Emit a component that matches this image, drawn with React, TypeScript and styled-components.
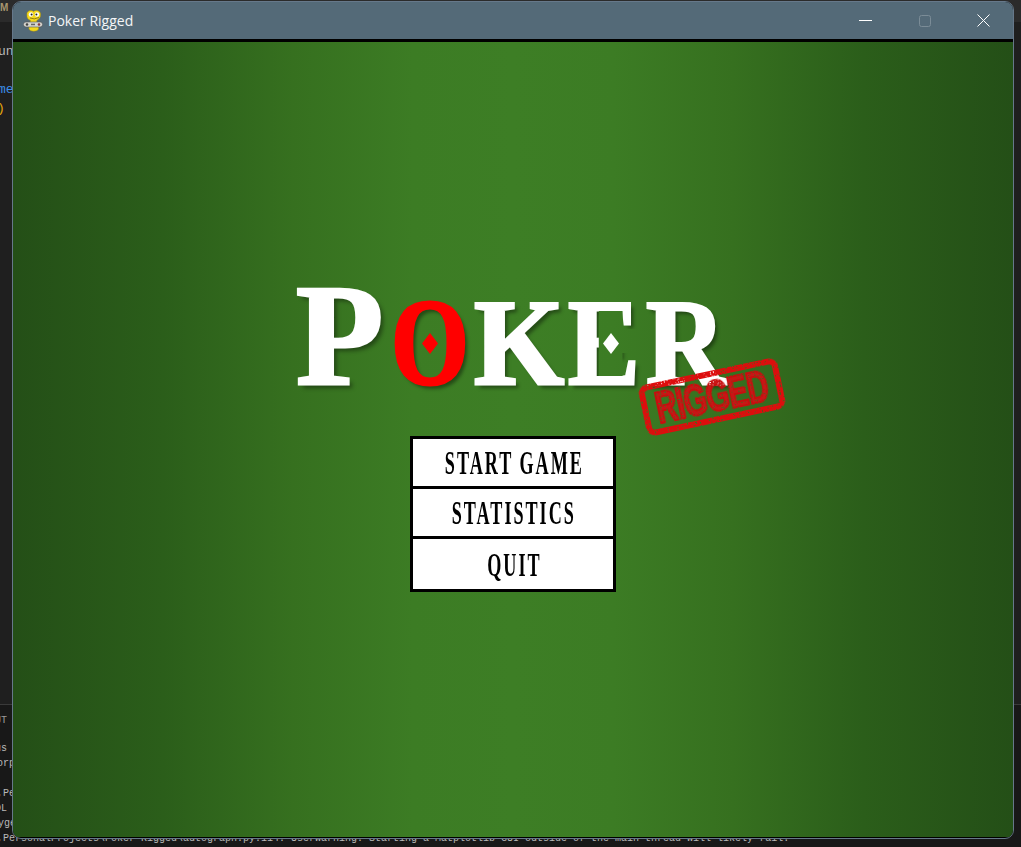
import { FC } from 'react';
import styled, { createGlobalStyle } from 'styled-components';

const GlobalStyle = createGlobalStyle`
  html, body {
    margin: 0;
    padding: 0;
    background: #181818;
  }
`;

const Desktop = styled.div`
  position: relative;
  width: 1021px;
  height: 847px;
  overflow: hidden;
  background: #181818;
  font-family: 'Liberation Mono', monospace;
`;

/* editor + terminal that sit behind the game window */
const Backdrop = styled.div`
  display: flex;
  flex-direction: column;
  height: 100%;
`;

const EditorPane = styled.div`
  height: 705px;
  flex: none;
  box-sizing: border-box;
  background: #1f1f1f;
  border-bottom: 1px solid #3a3a3a;
`;

const MenuStrip = styled.div`
  height: 22px;
  box-sizing: border-box;
  background: #2b2b2b;
  color: #a8956e;
  font: bold 10px/16px 'Liberation Sans', sans-serif;
`;

const TerminalPane = styled.div`
  flex: 1;
  padding-top: 8px;
`;

const BackLine = styled.div<{ $color?: string; $big?: boolean; $shift?: number }>`
  height: ${(p) => (p.$big ? 19 : 15)}px;
  line-height: ${(p) => (p.$big ? 19 : 15)}px;
  font-size: ${(p) => (p.$big ? 13 : 10)}px;
  margin-left: ${(p) => p.$shift ?? 0}px;
  color: ${(p) => p.$color ?? '#b8b8b8'};
  white-space: pre;
`;

const EditorLines = styled.div`
  padding-top: 20px;
`;

const TerminalLines = styled.div`
  padding-top: 13px;
`;

const Window = styled.div`
  position: absolute;
  left: 12px;
  top: 1px;
  width: 1002px;
  height: 838px;
  box-sizing: border-box;
  display: flex;
  flex-direction: column;
  overflow: hidden;
  background: #000;
  border: 1px solid #66788a;
  border-radius: 9px;
`;

const TitleBar = styled.header`
  height: 37px;
  flex: none;
  display: flex;
  align-items: center;
  background: #546a78;
  border-bottom: 3px solid #000;
  padding-left: 10px;
  color: #f4f6f7;
  font: 14px 'Open Sans', sans-serif;
`;

const AppIcon = styled.svg`
  width: 20px;
  height: 22px;
  flex: none;
  margin-right: 5px;
`;

const Title = styled.span`
  flex: 1;
`;

const WindowButton = styled.button<{ $dim?: boolean }>`
  width: 59px;
  height: 100%;
  padding: 0;
  display: flex;
  align-items: center;
  justify-content: center;
  border: 0;
  background: none;
  color: ${(p) => (p.$dim ? '#7b8c97' : '#ffffff')};
`;

const Felt = styled.main`
  flex: 1;
  display: flex;
  flex-direction: column;
  align-items: center;
  justify-content: center;
  margin-bottom: 1px;
  background: linear-gradient(
    90deg,
    #244f17 0%,
    #2b5e1a 15%,
    #36701f 28%,
    #3c7c24 40%,
    #3d7e25 50%,
    #3c7c24 60%,
    #36701f 72%,
    #2b5e1a 85%,
    #244f17 100%
  );
`;

const Logo = styled.div`
  position: relative;
  width: 426px;
  height: 149px;
  margin-left: -8px;
  display: flex;
  align-items: flex-start;
`;

const Letter = styled.span<{
  $red?: boolean;
  $big?: boolean;
  $notch?: boolean;
  $width: number;
  $scale: number;
}>`
  display: block;
  flex: none;
  width: ${(p) => p.$width}px;
  margin-top: ${(p) => (p.$big ? -40 : -20)}px;
  font: bold ${(p) => (p.$big ? 143 : 122)}px/1.25 'Liberation Serif', serif;
  color: ${(p) => (p.$red ? '#ff0000' : '#ffffff')};
  -webkit-text-stroke: 3px ${(p) => (p.$red ? '#ff0000' : '#ffffff')};
  text-shadow: 4px 4px 4px rgba(0, 0, 0, 0.4);
  transform: scaleX(${(p) => p.$scale});
  transform-origin: left top;
  ${(p) =>
    p.$notch &&
    `clip-path: polygon(evenodd, -20px -20px, 130px -20px, 130px 180px, -20px 180px, -20px -20px,
      35px 44px, 62px 44px, 62px 62px, 95px 62px, 95px 86px, 62px 86px, 62px 109px, 35px 109px, 35px 44px);`}
`;

const Diamond = styled.svg`
  position: absolute;
  top: 46px;
  width: 16px;
  height: 21px;
`;

const Stamp = styled.div`
  position: absolute;
  left: 345px;
  top: 84px;
  width: 142px;
  height: 52px;
  box-sizing: border-box;
  display: flex;
  align-items: center;
  justify-content: center;
  border: 6px solid #dd1010;
  border-radius: 9px;
  transform: rotate(-12deg);
  filter: url(#stamp-wear);
`;

const StampText = styled.span`
  display: block;
  font: bold 44px/36px 'Liberation Sans', sans-serif;
  color: #c81414;
  letter-spacing: -1px;
  transform: scaleX(0.68);
  -webkit-text-stroke: 2px #c81010;
`;

const HiddenDefs = styled.svg`
  position: absolute;
  width: 0;
  height: 0;
`;

const Menu = styled.nav`
  display: flex;
  flex-direction: column;
  width: 200px;
  border: 3px solid #000;
  background: #000;
  gap: 3px;
`;

const MenuButton = styled.button<{ $tall?: boolean }>`
  height: ${(p) => (p.$tall ? 50 : 47)}px;
  padding: 0;
  border: 0;
  display: flex;
  align-items: center;
  justify-content: center;
  background: #fff;
  color: #000;
`;

const MenuLabel = styled.span`
  display: block;
  margin: 2px 0 0 2px;
  font: 33px/1 'Liberation Serif', serif;
  font-weight: 700;
  letter-spacing: 3.6px;
  white-space: nowrap;
  transform: scaleX(0.55);
`;

const PygameSnake: FC = () => (
  <AppIcon viewBox="0 0 20 22">
    <path
      d="M4 5 C3 1 8 -1 10.5 1.5 C13 -1 18.5 1 17.5 5 C18 8.5 14 10 13.5 11 C15 13 16 16 15.5 19 C14.5 22 7 22 6 19 C5.5 16 7 13 7.5 10.5 C5 9.5 3.5 7.5 4 5 Z"
      fill="#f4d81c"
      stroke="#a88f10"
      strokeWidth="0.5"
    />
    <circle cx="8" cy="4.5" r="2.2" fill="#fff" />
    <circle cx="14" cy="4.5" r="2.2" fill="#fff" />
    <circle cx="8.6" cy="4.6" r="1" fill="#222" />
    <circle cx="13.4" cy="4.6" r="1" fill="#222" />
    <path d="M7 8 Q11 10 16 7.5" stroke="#6a5a08" strokeWidth="0.7" fill="none" />
    <rect x="0.5" y="12" width="19" height="5" rx="2.4" fill="#d6d6d0" stroke="#555" strokeWidth="0.6" />
    <circle cx="4" cy="14.5" r="1.3" fill="#444" />
    <circle cx="16" cy="14.5" r="1.3" fill="#8a3a3a" />
    <rect x="8" y="13.7" width="4" height="1.5" fill="#666" />
  </AppIcon>
);

const DiamondShape: FC<{ fill: string; left: number }> = ({ fill, left }) => (
  <Diamond viewBox="0 0 16 21" style={{ left }}>
    <path d="M8 0 L16 10.5 L8 21 L0 10.5 Z" fill={fill} />
  </Diamond>
);

const App: FC = () => (
  <Desktop>
    <GlobalStyle />
    <HiddenDefs>
      <filter id="stamp-wear" x="-5%" y="-5%" width="110%" height="110%">
        <feTurbulence type="fractalNoise" baseFrequency="0.7" numOctaves="2" seed="4" result="noise" />
        <feColorMatrix
          in="noise"
          type="matrix"
          values="0 0 0 0 0  0 0 0 0 0  0 0 0 0 0  0 0 0 -9 6.6"
          result="wear"
        />
        <feComposite in="SourceGraphic" in2="wear" operator="in" />
      </filter>
    </HiddenDefs>
    <Backdrop>
      <EditorPane>
        <MenuStrip>M</MenuStrip>
        <EditorLines>
          <BackLine $big $shift={-2}>un</BackLine>
          <BackLine $big> </BackLine>
          <BackLine $big $shift={-2} $color="#3b8eea">me</BackLine>
          <BackLine $big $shift={-3} $color="#e5a50a">{')'}</BackLine>
        </EditorLines>
      </EditorPane>
      <TerminalPane>
        <BackLine $shift={-5} $color="#9a9a9a">UT</BackLine>
        <TerminalLines>
          <BackLine $shift={-5}>us</BackLine>
          <BackLine $shift={-3}>orp</BackLine>
          <BackLine> </BackLine>
          <BackLine $shift={-3}>,Pe</BackLine>
          <BackLine $shift={-5}>OL</BackLine>
          <BackLine $shift={-2}>yge</BackLine>
          <BackLine $shift={-3}>
            {',PersonalProjects\\Poker Rigged\\autograph.py:114: UserWarning: Starting a Matplotlib GUI outside of the main thread will likely fail.'}
          </BackLine>
        </TerminalLines>
      </TerminalPane>
    </Backdrop>
    <Window>
      <TitleBar>
        <PygameSnake />
        <Title>Poker Rigged</Title>
        <WindowButton>
          <svg width="13" height="2"><rect width="13" height="1" fill="currentColor" /></svg>
        </WindowButton>
        <WindowButton $dim>
          <svg width="12" height="12">
            <rect x="0.5" y="0.5" width="11" height="11" rx="2" fill="none" stroke="currentColor" />
          </svg>
        </WindowButton>
        <WindowButton>
          <svg width="13" height="13">
            <path d="M0.5 0.5 L12.5 12.5 M12.5 0.5 L0.5 12.5" stroke="currentColor" />
          </svg>
        </WindowButton>
      </TitleBar>
      <Felt>
        <Logo>
          <Letter $big $width={95} $scale={1}>P</Letter>
          <Letter $red $width={83} $scale={0.82}>O</Letter>
          <Letter $width={94} $scale={0.95}>K</Letter>
          <Letter $notch $width={78} $scale={0.88}>E</Letter>
          <Letter $width={76} $scale={0.9}>R</Letter>
          <DiamondShape fill="#ff0000" left={126} />
          <DiamondShape fill="#ffffff" left={307} />
          <Stamp>
            <StampText>RIGGED</StampText>
          </Stamp>
        </Logo>
        <Menu>
          <MenuButton><MenuLabel>START GAME</MenuLabel></MenuButton>
          <MenuButton><MenuLabel>STATISTICS</MenuLabel></MenuButton>
          <MenuButton $tall><MenuLabel>QUIT</MenuLabel></MenuButton>
        </Menu>
      </Felt>
    </Window>
  </Desktop>
);

export default App;
